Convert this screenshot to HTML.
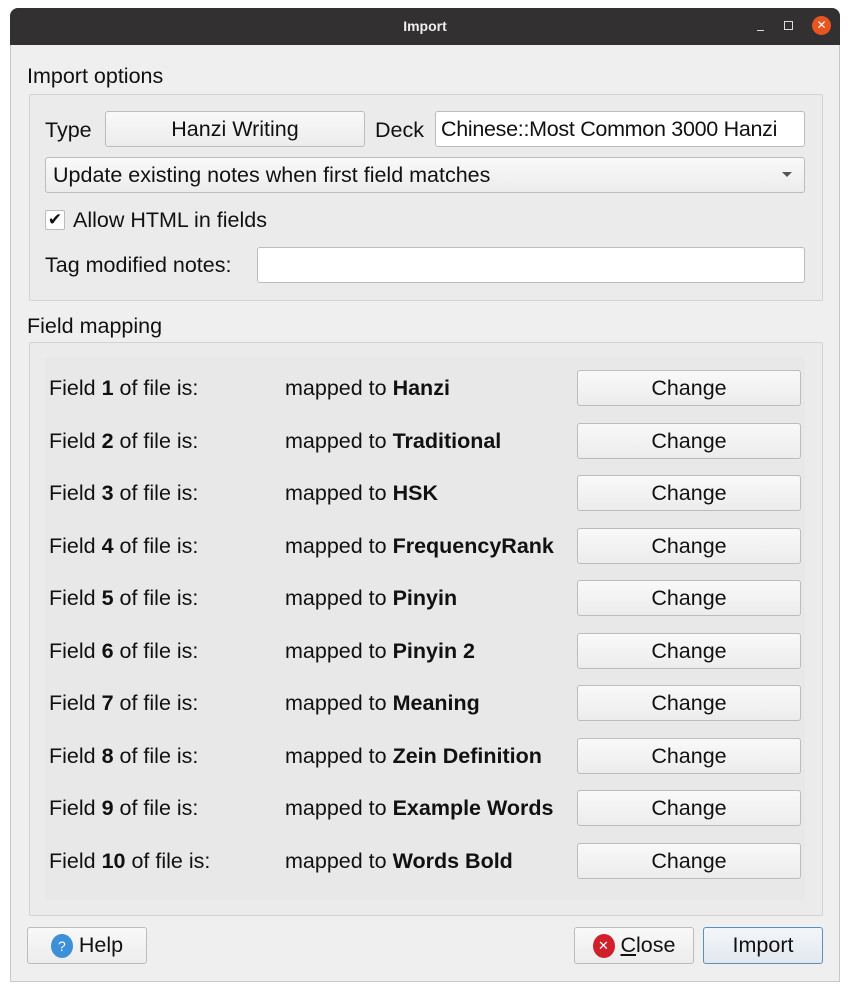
<!DOCTYPE html>
<html><head><meta charset="utf-8"><style>
*{box-sizing:border-box;margin:0;padding:0}
body{width:850px;height:991px;background:#fff;font-family:"Liberation Sans","DejaVu Sans",sans-serif;font-size:21.5px;color:#111;position:relative;overflow:hidden}
.a{position:absolute;white-space:nowrap}
.win{left:10px;top:8px;width:830px;height:974px;background:#efefef;border:1px solid #c8c8c8;border-top:none;border-radius:8px 8px 0 0;overflow:hidden}
.title{left:10px;top:8px;width:830px;height:37px;background:#323030;border-radius:8px 8px 0 0;color:#eee;font-size:14px;font-weight:bold;text-align:center;line-height:37px}
.grp{border:1px solid #d4d4d4;background:#ebebeb;border-radius:2px}
.btn{border:1px solid #bcbcbc;border-radius:3px;background:linear-gradient(#f9f9f9,#ececec);text-align:center;display:flex;align-items:center;justify-content:center}
.inp{background:#fff;border:1px solid #bcbcbc;border-radius:3px}
.lbl{line-height:24px}
</style></head><body>
<div class="a win"></div>
<div class="a title">Import</div>
<div class="a" style="left:757px;top:30px;width:7px;height:1px;background:#ddd"></div>
<div class="a" style="left:784px;top:21px;width:9px;height:9px;border:1px solid #ddd"></div>
<div class="a" style="left:812px;top:16px;width:19px;height:19px;border-radius:50%;background:#e95420;color:#fff;font-size:12px;text-align:center;line-height:19px">✕</div>

<div class="a lbl" style="left:27px;top:64px">Import options</div>
<div class="a grp" style="left:29px;top:94px;width:794px;height:207px"></div>
<div class="a lbl" style="left:45px;top:118px">Type</div>
<div class="a btn" style="left:105px;top:111px;width:260px;height:36px">Hanzi Writing</div>
<div class="a lbl" style="left:375px;top:118px">Deck</div>
<div class="a inp" style="left:435px;top:111px;width:370px;height:36px;padding-left:5px;line-height:34px;overflow:hidden;letter-spacing:-0.3px">Chinese::Most Common 3000 Hanzi</div>
<div class="a btn" style="left:45px;top:157px;width:760px;height:36px;justify-content:flex-start;padding-left:7px">Update existing notes when first field matches</div>
<div class="a" style="left:782px;top:172px;width:0;height:0;border-left:5px solid transparent;border-right:5px solid transparent;border-top:5px solid #555"></div>
<div class="a" style="left:45px;top:210px;width:20px;height:20px;background:#fff;border:1px solid #bbb;border-radius:2px;font-size:17px;line-height:18px;text-align:center;font-weight:bold">✔</div>
<div class="a lbl" style="left:73px;top:208px">Allow HTML in fields</div>
<div class="a lbl" style="left:45px;top:253px">Tag modified notes:</div>
<div class="a inp" style="left:257px;top:247px;width:548px;height:36px"></div>

<div class="a lbl" style="left:27px;top:314px">Field mapping</div>
<div class="a grp" style="left:29px;top:342px;width:794px;height:574px"></div>
<div class="a" style="left:45px;top:358px;width:760px;height:542px;background:#e8e8e8"></div>

<div class="a lbl" style="left:49px;top:376px">Field <b>1</b> of file is:</div><div class="a lbl" style="left:285px;top:376px">mapped to <b>Hanzi</b></div><div class="a btn" style="left:577px;top:370px;width:224px;height:36px">Change</div>
<div class="a lbl" style="left:49px;top:429px">Field <b>2</b> of file is:</div><div class="a lbl" style="left:285px;top:429px">mapped to <b>Traditional</b></div><div class="a btn" style="left:577px;top:423px;width:224px;height:36px">Change</div>
<div class="a lbl" style="left:49px;top:481px">Field <b>3</b> of file is:</div><div class="a lbl" style="left:285px;top:481px">mapped to <b>HSK</b></div><div class="a btn" style="left:577px;top:475px;width:224px;height:36px">Change</div>
<div class="a lbl" style="left:49px;top:534px">Field <b>4</b> of file is:</div><div class="a lbl" style="left:285px;top:534px">mapped to <b>FrequencyRank</b></div><div class="a btn" style="left:577px;top:528px;width:224px;height:36px">Change</div>
<div class="a lbl" style="left:49px;top:586px">Field <b>5</b> of file is:</div><div class="a lbl" style="left:285px;top:586px">mapped to <b>Pinyin</b></div><div class="a btn" style="left:577px;top:580px;width:224px;height:36px">Change</div>
<div class="a lbl" style="left:49px;top:639px">Field <b>6</b> of file is:</div><div class="a lbl" style="left:285px;top:639px">mapped to <b>Pinyin 2</b></div><div class="a btn" style="left:577px;top:633px;width:224px;height:36px">Change</div>
<div class="a lbl" style="left:49px;top:691px">Field <b>7</b> of file is:</div><div class="a lbl" style="left:285px;top:691px">mapped to <b>Meaning</b></div><div class="a btn" style="left:577px;top:685px;width:224px;height:36px">Change</div>
<div class="a lbl" style="left:49px;top:744px">Field <b>8</b> of file is:</div><div class="a lbl" style="left:285px;top:744px">mapped to <b>Zein Definition</b></div><div class="a btn" style="left:577px;top:738px;width:224px;height:36px">Change</div>
<div class="a lbl" style="left:49px;top:796px">Field <b>9</b> of file is:</div><div class="a lbl" style="left:285px;top:796px">mapped to <b>Example Words</b></div><div class="a btn" style="left:577px;top:790px;width:224px;height:36px">Change</div>
<div class="a lbl" style="left:49px;top:849px">Field <b>10</b> of file is:</div><div class="a lbl" style="left:285px;top:849px">mapped to <b>Words Bold</b></div><div class="a btn" style="left:577px;top:843px;width:224px;height:36px">Change</div>

<div class="a btn" style="left:27px;top:927px;width:120px;height:37px"><span style="display:inline-block;width:22px;height:24px;border-radius:50%;background:#3d8fd8;color:#fff;font-size:14px;line-height:24px;margin-right:6px">?</span>Help</div>
<div class="a btn" style="left:574px;top:927px;width:120px;height:37px"><span style="display:inline-block;width:22px;height:24px;border-radius:50%;background:#d0202c;color:#fff;font-size:13px;font-weight:bold;line-height:24px;margin-right:6px">✕</span><u>C</u>lose</div>
<div class="a btn" style="left:703px;top:927px;width:120px;height:37px;border-color:#5b8fc0;background:linear-gradient(#f3f6f9,#e3e8ee)">Import</div>
</body></html>
